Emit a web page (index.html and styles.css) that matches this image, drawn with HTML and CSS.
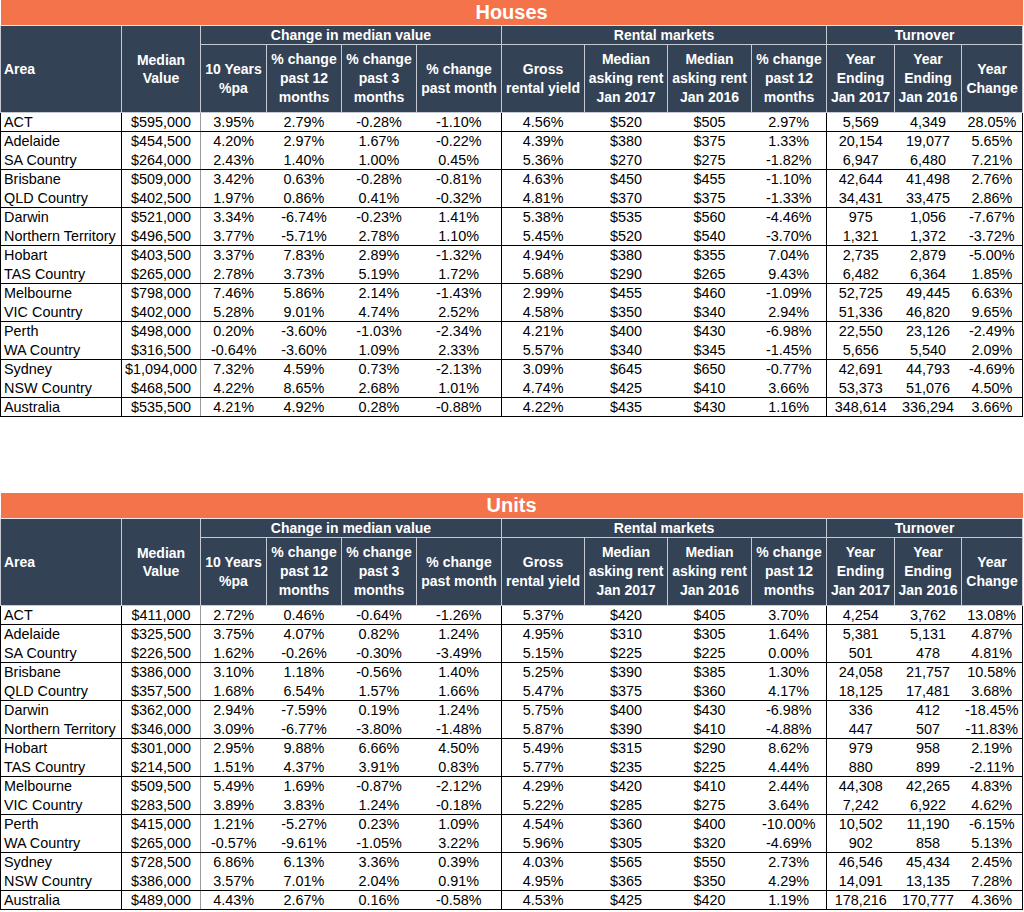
FILE: index.html
```html
<!DOCTYPE html>
<html lang="en">
<head>
<meta charset="utf-8">
<title>Houses and Units</title>
<link rel="stylesheet" href="styles.css">
</head>
<body>
<table class="market">
  <colgroup>
    <col class="w-area"><col class="w-median"><col class="w-10y"><col class="w-12m"><col class="w-3m"><col class="w-1m">
    <col class="w-gross"><col class="w-r17"><col class="w-r16"><col class="w-rch"><col class="w-t17"><col class="w-t16"><col class="w-tch">
  </colgroup>
  <thead>
    <tr><th class="title" colspan="13">Houses</th></tr>
    <tr class="group">
      <th class="area" rowspan="2">Area</th>
      <th rowspan="2">Median<br>Value</th>
      <th colspan="4">Change in median value</th>
      <th colspan="4">Rental markets</th>
      <th colspan="3">Turnover</th>
    </tr>
    <tr class="sub">
      <th>10 Years<br>%pa</th>
      <th>% change<br>past 12<br>months</th>
      <th>% change<br>past 3<br>months</th>
      <th>% change<br>past month</th>
      <th>Gross<br>rental yield</th>
      <th>Median<br>asking rent<br>Jan 2017</th>
      <th>Median<br>asking rent<br>Jan 2016</th>
      <th>% change<br>past 12<br>months</th>
      <th>Year<br>Ending<br>Jan 2017</th>
      <th>Year<br>Ending<br>Jan 2016</th>
      <th>Year<br>Change</th>
    </tr>
  </thead>
  <tbody>
    <tr class="end"><td>ACT</td><td>$595,000</td><td>3.95%</td><td>2.79%</td><td>-0.28%</td><td>-1.10%</td><td>4.56%</td><td>$520</td><td>$505</td><td>2.97%</td><td>5,569</td><td>4,349</td><td>28.05%</td></tr>
    <tr><td>Adelaide</td><td>$454,500</td><td>4.20%</td><td>2.97%</td><td>1.67%</td><td>-0.22%</td><td>4.39%</td><td>$380</td><td>$375</td><td>1.33%</td><td>20,154</td><td>19,077</td><td>5.65%</td></tr>
    <tr class="end"><td>SA Country</td><td>$264,000</td><td>2.43%</td><td>1.40%</td><td>1.00%</td><td>0.45%</td><td>5.36%</td><td>$270</td><td>$275</td><td>-1.82%</td><td>6,947</td><td>6,480</td><td>7.21%</td></tr>
    <tr><td>Brisbane</td><td>$509,000</td><td>3.42%</td><td>0.63%</td><td>-0.28%</td><td>-0.81%</td><td>4.63%</td><td>$450</td><td>$455</td><td>-1.10%</td><td>42,644</td><td>41,498</td><td>2.76%</td></tr>
    <tr class="end"><td>QLD Country</td><td>$402,500</td><td>1.97%</td><td>0.86%</td><td>0.41%</td><td>-0.32%</td><td>4.81%</td><td>$370</td><td>$375</td><td>-1.33%</td><td>34,431</td><td>33,475</td><td>2.86%</td></tr>
    <tr><td>Darwin</td><td>$521,000</td><td>3.34%</td><td>-6.74%</td><td>-0.23%</td><td>1.41%</td><td>5.38%</td><td>$535</td><td>$560</td><td>-4.46%</td><td>975</td><td>1,056</td><td>-7.67%</td></tr>
    <tr class="end"><td>Northern Territory</td><td>$496,500</td><td>3.77%</td><td>-5.71%</td><td>2.78%</td><td>1.10%</td><td>5.45%</td><td>$520</td><td>$540</td><td>-3.70%</td><td>1,321</td><td>1,372</td><td>-3.72%</td></tr>
    <tr><td>Hobart</td><td>$403,500</td><td>3.37%</td><td>7.83%</td><td>2.89%</td><td>-1.32%</td><td>4.94%</td><td>$380</td><td>$355</td><td>7.04%</td><td>2,735</td><td>2,879</td><td>-5.00%</td></tr>
    <tr class="end"><td>TAS Country</td><td>$265,000</td><td>2.78%</td><td>3.73%</td><td>5.19%</td><td>1.72%</td><td>5.68%</td><td>$290</td><td>$265</td><td>9.43%</td><td>6,482</td><td>6,364</td><td>1.85%</td></tr>
    <tr><td>Melbourne</td><td>$798,000</td><td>7.46%</td><td>5.86%</td><td>2.14%</td><td>-1.43%</td><td>2.99%</td><td>$455</td><td>$460</td><td>-1.09%</td><td>52,725</td><td>49,445</td><td>6.63%</td></tr>
    <tr class="end"><td>VIC Country</td><td>$402,000</td><td>5.28%</td><td>9.01%</td><td>4.74%</td><td>2.52%</td><td>4.58%</td><td>$350</td><td>$340</td><td>2.94%</td><td>51,336</td><td>46,820</td><td>9.65%</td></tr>
    <tr><td>Perth</td><td>$498,000</td><td>0.20%</td><td>-3.60%</td><td>-1.03%</td><td>-2.34%</td><td>4.21%</td><td>$400</td><td>$430</td><td>-6.98%</td><td>22,550</td><td>23,126</td><td>-2.49%</td></tr>
    <tr class="end"><td>WA Country</td><td>$316,500</td><td>-0.64%</td><td>-3.60%</td><td>1.09%</td><td>2.33%</td><td>5.57%</td><td>$340</td><td>$345</td><td>-1.45%</td><td>5,656</td><td>5,540</td><td>2.09%</td></tr>
    <tr><td>Sydney</td><td>$1,094,000</td><td>7.32%</td><td>4.59%</td><td>0.73%</td><td>-2.13%</td><td>3.09%</td><td>$645</td><td>$650</td><td>-0.77%</td><td>42,691</td><td>44,793</td><td>-4.69%</td></tr>
    <tr class="end"><td>NSW Country</td><td>$468,500</td><td>4.22%</td><td>8.65%</td><td>2.68%</td><td>1.01%</td><td>4.74%</td><td>$425</td><td>$410</td><td>3.66%</td><td>53,373</td><td>51,076</td><td>4.50%</td></tr>
    <tr class="end"><td>Australia</td><td>$535,500</td><td>4.21%</td><td>4.92%</td><td>0.28%</td><td>-0.88%</td><td>4.22%</td><td>$435</td><td>$430</td><td>1.16%</td><td>348,614</td><td>336,294</td><td>3.66%</td></tr>
  </tbody>
</table>

<table class="market units">
  <colgroup>
    <col class="w-area"><col class="w-median"><col class="w-10y"><col class="w-12m"><col class="w-3m"><col class="w-1m">
    <col class="w-gross"><col class="w-r17"><col class="w-r16"><col class="w-rch"><col class="w-t17"><col class="w-t16"><col class="w-tch">
  </colgroup>
  <thead>
    <tr><th class="title" colspan="13">Units</th></tr>
    <tr class="group">
      <th class="area" rowspan="2">Area</th>
      <th rowspan="2">Median<br>Value</th>
      <th colspan="4">Change in median value</th>
      <th colspan="4">Rental markets</th>
      <th colspan="3">Turnover</th>
    </tr>
    <tr class="sub">
      <th>10 Years<br>%pa</th>
      <th>% change<br>past 12<br>months</th>
      <th>% change<br>past 3<br>months</th>
      <th>% change<br>past month</th>
      <th>Gross<br>rental yield</th>
      <th>Median<br>asking rent<br>Jan 2017</th>
      <th>Median<br>asking rent<br>Jan 2016</th>
      <th>% change<br>past 12<br>months</th>
      <th>Year<br>Ending<br>Jan 2017</th>
      <th>Year<br>Ending<br>Jan 2016</th>
      <th>Year<br>Change</th>
    </tr>
  </thead>
  <tbody>
    <tr class="end"><td>ACT</td><td>$411,000</td><td>2.72%</td><td>0.46%</td><td>-0.64%</td><td>-1.26%</td><td>5.37%</td><td>$420</td><td>$405</td><td>3.70%</td><td>4,254</td><td>3,762</td><td>13.08%</td></tr>
    <tr><td>Adelaide</td><td>$325,500</td><td>3.75%</td><td>4.07%</td><td>0.82%</td><td>1.24%</td><td>4.95%</td><td>$310</td><td>$305</td><td>1.64%</td><td>5,381</td><td>5,131</td><td>4.87%</td></tr>
    <tr class="end"><td>SA Country</td><td>$226,500</td><td>1.62%</td><td>-0.26%</td><td>-0.30%</td><td>-3.49%</td><td>5.15%</td><td>$225</td><td>$225</td><td>0.00%</td><td>501</td><td>478</td><td>4.81%</td></tr>
    <tr><td>Brisbane</td><td>$386,000</td><td>3.10%</td><td>1.18%</td><td>-0.56%</td><td>1.40%</td><td>5.25%</td><td>$390</td><td>$385</td><td>1.30%</td><td>24,058</td><td>21,757</td><td>10.58%</td></tr>
    <tr class="end"><td>QLD Country</td><td>$357,500</td><td>1.68%</td><td>6.54%</td><td>1.57%</td><td>1.66%</td><td>5.47%</td><td>$375</td><td>$360</td><td>4.17%</td><td>18,125</td><td>17,481</td><td>3.68%</td></tr>
    <tr><td>Darwin</td><td>$362,000</td><td>2.94%</td><td>-7.59%</td><td>0.19%</td><td>1.24%</td><td>5.75%</td><td>$400</td><td>$430</td><td>-6.98%</td><td>336</td><td>412</td><td>-18.45%</td></tr>
    <tr class="end"><td>Northern Territory</td><td>$346,000</td><td>3.09%</td><td>-6.77%</td><td>-3.80%</td><td>-1.48%</td><td>5.87%</td><td>$390</td><td>$410</td><td>-4.88%</td><td>447</td><td>507</td><td>-11.83%</td></tr>
    <tr><td>Hobart</td><td>$301,000</td><td>2.95%</td><td>9.88%</td><td>6.66%</td><td>4.50%</td><td>5.49%</td><td>$315</td><td>$290</td><td>8.62%</td><td>979</td><td>958</td><td>2.19%</td></tr>
    <tr class="end"><td>TAS Country</td><td>$214,500</td><td>1.51%</td><td>4.37%</td><td>3.91%</td><td>0.83%</td><td>5.77%</td><td>$235</td><td>$225</td><td>4.44%</td><td>880</td><td>899</td><td>-2.11%</td></tr>
    <tr><td>Melbourne</td><td>$509,500</td><td>5.49%</td><td>1.69%</td><td>-0.87%</td><td>-2.12%</td><td>4.29%</td><td>$420</td><td>$410</td><td>2.44%</td><td>44,308</td><td>42,265</td><td>4.83%</td></tr>
    <tr class="end"><td>VIC Country</td><td>$283,500</td><td>3.89%</td><td>3.83%</td><td>1.24%</td><td>-0.18%</td><td>5.22%</td><td>$285</td><td>$275</td><td>3.64%</td><td>7,242</td><td>6,922</td><td>4.62%</td></tr>
    <tr><td>Perth</td><td>$415,000</td><td>1.21%</td><td>-5.27%</td><td>0.23%</td><td>1.09%</td><td>4.54%</td><td>$360</td><td>$400</td><td>-10.00%</td><td>10,502</td><td>11,190</td><td>-6.15%</td></tr>
    <tr class="end"><td>WA Country</td><td>$265,000</td><td>-0.57%</td><td>-9.61%</td><td>-1.05%</td><td>3.22%</td><td>5.96%</td><td>$305</td><td>$320</td><td>-4.69%</td><td>902</td><td>858</td><td>5.13%</td></tr>
    <tr><td>Sydney</td><td>$728,500</td><td>6.86%</td><td>6.13%</td><td>3.36%</td><td>0.39%</td><td>4.03%</td><td>$565</td><td>$550</td><td>2.73%</td><td>46,546</td><td>45,434</td><td>2.45%</td></tr>
    <tr class="end"><td>NSW Country</td><td>$386,000</td><td>3.57%</td><td>7.01%</td><td>2.04%</td><td>0.91%</td><td>4.95%</td><td>$365</td><td>$350</td><td>4.29%</td><td>14,091</td><td>13,135</td><td>7.28%</td></tr>
    <tr class="end"><td>Australia</td><td>$489,000</td><td>4.43%</td><td>2.67%</td><td>0.16%</td><td>-0.58%</td><td>4.53%</td><td>$425</td><td>$420</td><td>1.19%</td><td>178,216</td><td>170,777</td><td>4.36%</td></tr>
  </tbody>
</table>
</body>
</html>
```

FILE: styles.css
```css
html, body {
  margin: 0;
  padding: 0;
  background: #ffffff;
}

body {
  font-family: "Liberation Sans", Arial, sans-serif;
  color: #000000;
}

.market {
  border-collapse: collapse;
  table-layout: fixed;
  width: 1023px;
}

.units {
  margin-top: 76px;
}

.w-area { width: 121px; }
.w-median { width: 79px; }
.w-10y { width: 66px; }
.w-12m { width: 75px; }
.w-3m { width: 75px; }
.w-1m { width: 85px; }
.w-gross { width: 83px; }
.w-r17 { width: 83px; }
.w-r16 { width: 84px; }
.w-rch { width: 75px; }
.w-t17 { width: 68px; }
.w-t16 { width: 67px; }
.w-tch { width: 61px; }

.market th {
  background: #344256;
  color: #ffffff;
  font-weight: bold;
  font-size: 14px;
  line-height: 19px;
  padding: 0 1px;
  border: 1px solid #c5cad2;
  text-align: center;
  vertical-align: middle;
  white-space: nowrap;
}

.market th.title {
  background: #f4734a;
  font-size: 20px;
  line-height: 25px;
  height: 25px;
  padding: 0;
  border: none;
  border-bottom: 1px solid #e9e9e9;
}

.market .group th {
  line-height: 18px;
  height: 18px;
}

.market .sub th {
  height: 67px;
}

.market th.area {
  text-align: left;
  padding-left: 3px;
}

.market td {
  font-size: 14.4px;
  line-height: 19px;
  height: 19px;
  padding: 0 1px;
  text-align: center;
  white-space: nowrap;
  border: none;
}

.market tr.end td {
  line-height: 18px;
  height: 18px;
  border-bottom: 1px solid #000000;
}

.market td:first-child {
  text-align: left;
  padding-left: 3px;
  border-left: 1px solid #000000;
  border-right: 1px solid #000000;
}

.market td:nth-child(2) {
  border-right: 1px solid #9a9a9a;
}

.market td:nth-child(6),
.market td:nth-child(10),
.market td:nth-child(13) {
  border-right: 1px solid #000000;
}
```
